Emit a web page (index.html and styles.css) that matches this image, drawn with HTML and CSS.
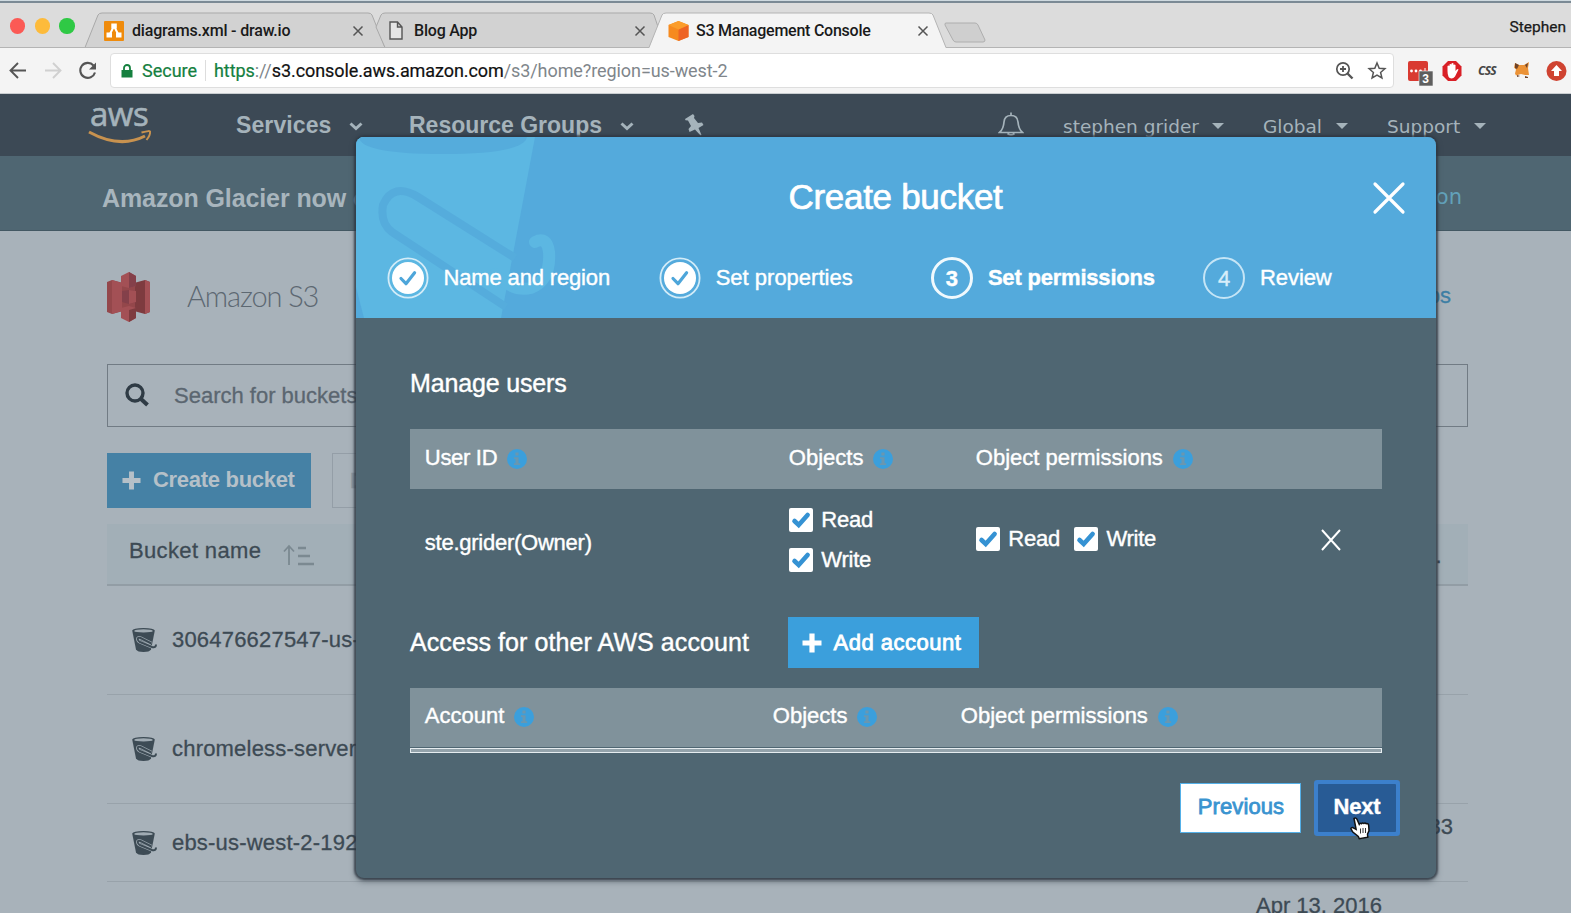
FILE: index.html
```html
<!DOCTYPE html>
<html lang="en">
<head>
<meta charset="utf-8">
<title>S3 Management Console</title>
<link rel="stylesheet" href="styles.css">
</head>
<body>
<svg class="defs" width="0" height="0" aria-hidden="true">
  <symbol id="info" viewBox="0 0 20 20"><circle cx="10" cy="10" r="10" fill="#3b9fdc"/><path d="M8.4 3.6h3.2v2.8H8.4zM7 8.2h4.6v6h1.6v1.7H6.9v-1.7h1.6V9.9H7z" fill="#6a97b0"/></symbol>
  <symbol id="check" viewBox="0 0 24 24"><path d="M5.500 13l4.200 4L18.600 7" fill="none" stroke="#3592d3" stroke-width="4.600" stroke-linecap="round"/></symbol>
  <symbol id="done" viewBox="0 0 42 42"><circle cx="21" cy="21" r="19.6" fill="none" stroke="#d3ecf8" stroke-width="1.8"/><circle cx="21" cy="21" r="16" fill="#fff"/><path d="M14 21.5l5 5.2 8.6-11" fill="none" stroke="#4ea6da" stroke-width="3.200" stroke-linecap="round" stroke-linejoin="round"/></symbol>
  <symbol id="bucket" viewBox="0 0 26 26"><path d="M1.2 3.5Q2 1 12.500 1T23.800 3.500L20 22.500Q18.500 25 12.500 25T5 22.500z" fill="#3d4b55"/><ellipse cx="12.500" cy="3.900" rx="9.300" ry="1.700" fill="#a0abb3"/><path d="M20.500 16.500L9.500 11Q6.500 10 6.800 12.500Q7 14 9 15L21 20Q25 21 25 17.500" fill="none" stroke="#a4afb7" stroke-width="3.400"/><path d="M20.500 16.500L9.500 11Q6.500 10 6.800 12.500Q7 14 9 15L21 20Q25 21 25 17.500" fill="none" stroke="#3d4b55" stroke-width="2"/></symbol>
  <symbol id="plus" viewBox="0 0 20 20"><path d="M10 .5v19M.5 10h19" fill="none" stroke="currentColor" stroke-width="5.200"/></symbol>
  <symbol id="cross" viewBox="0 0 14 14"><path d="M2.500 2.500l9 9M11.500 2.500l-9 9" fill="none" stroke="#555" stroke-width="1.500"/></symbol>
</svg>

<div class="titlebar">
  <div class="lights"><i class="red"></i><i class="yellow"></i><i class="green"></i></div>
  <svg class="tabshapes" width="1000" height="48" viewBox="0 0 1000 48">
    <path d="M85 47.500L98 15Q99 13 102 13H368Q371 13 372 15L385 47.500" fill="#d2d2d2" stroke="#a9a9a9"/>
    <path d="M376 27L381 15Q382 13 385 13H650Q653 13 654 15L665 47.500H385Z" fill="#d2d2d2" stroke="#a9a9a9"/>
    <path d="M649 48L662 15Q663 13 666 13H929Q932 13 933 15L946 48Z" fill="#f4f4f4"/>
    <path d="M0 47.500H649L662 15Q663 13 666 13H929Q932 13 933 15L946 47.500H1000" fill="none" stroke="#b4b4b4"/>
    <path d="M946 23H975Q977 23 978 25L985 40Q985 42 983 42H956Q954 42 953 40L945 25Q944.500 23 946 23z" fill="#cfcfcf" stroke="#aeaeae"/>
  </svg>
  <div class="tab tab1">
    <svg width="20" height="20" viewBox="0 0 20 20"><rect width="20" height="20" rx="1" fill="#ef8b0c"/><path d="M10 5L5.500 14M10 5l4.500 9" stroke="#fff" stroke-width="2"/><path d="M7.300 2.500h5.500v5H7.300zM2.500 11.500H8v5H2.500zM12 11.500h5.500v5H12z" fill="#fff"/></svg>
    <span class="t1">diagrams.xml - draw.io</span><svg class="x" width="14" height="14"><use href="#cross"/></svg>
  </div>
  <div class="tab tab2">
    <svg width="14" height="19" viewBox="0 0 14 19"><path d="M1 1h7.500L13 6v12H1zM8.500 1v5H13" fill="#e4e4e4" stroke="#555" stroke-width="1.400"/></svg>
    <span class="t2">Blog App</span><svg class="x" width="14" height="14"><use href="#cross"/></svg>
  </div>
  <div class="tab tab3">
    <svg width="21" height="20" viewBox="0 0 21 20"><path d="M10.500 0L20.500 4V16L10.500 20L.5 16V4z" fill="#f68a1f"/><path d="M10.500 8.500L20.500 4V16L10.500 20z" fill="#ee6424"/><path d="M10.500 0L20.500 4L10.500 8.500L.5 4z" fill="#fb9d2b"/></svg>
    <span class="t3">S3 Management Console</span><svg class="x" width="14" height="14"><use href="#cross"/></svg>
  </div>
  <span class="profile">Stephen</span>
</div>

<div class="toolbar">
  <svg class="navicons" width="110" height="46" viewBox="0 0 110 46" fill="none" stroke-width="1.900">
    <path d="M26 22.500H11M18 15l-7.500 7.500L18 30" stroke="#555"/>
    <path d="M45 22.500H60M53 15l7.500 7.500L53 30" stroke="#d0d0d0"/>
    <path d="M93.500 17.500A7.500 7.500 0 1 0 95 24.500" stroke="#555" stroke-width="2.100"/><path d="M96 14.500v7h-7z" fill="#555"/>
  </svg>
  <div class="omnibox">
    <svg width="12" height="14" viewBox="0 0 12 14"><path d="M.5 6h11v7.500H.5z" fill="#15803f"/><path d="M3 6V4a3 3 0 0 1 6 0v2" fill="none" stroke="#15803f" stroke-width="1.800"/></svg>
    <span class="secure">Secure</span>
    <span class="url"><b class="g">https</b>://<b class="k">s3.console.aws.amazon.com</b>/s3/home?region=us-west-2</span>
    <svg class="boxicons" width="54" height="22" viewBox="0 0 54 22" fill="none" stroke="#555"><circle cx="8" cy="9" r="6.200" stroke-width="1.700"/><path d="M12.500 13.500l5 5" stroke-width="2.400"/><path d="M5 9h6M8 6v6" stroke-width="1.800"/><path d="M42 3l2.200 5.200 5.700.5-4.300 3.700 1.300 5.500L42 15l-4.900 2.900 1.300-5.500-4.300-3.700 5.700-.5z" stroke-width="1.500"/></svg>
  </div>
  <svg class="exts" width="164" height="28" viewBox="0 0 164 28">
    <rect x="1" y="3" width="20" height="20" rx="2" fill="#d93a31"/><g fill="#fff"><circle cx="4.500" cy="13" r="1.400"/><circle cx="9" cy="13" r="1.400"/><circle cx="13.500" cy="13" r="1.400"/><path d="M17.500 10h1v6h-1z"/></g>
    <rect x="12" y="13" width="14" height="15" fill="#5e5e5e" stroke="#f4f4f4" stroke-width=".6"/><text x="15.200" y="25" class="badge">3</text>
    <path d="M41 3h8l5.500 5.500v9L49 23h-8l-5.500-5.500v-9z" fill="#d92027"/><path d="M40.500 13V8q1-1 2 0V6.500q1-1 2 0V5.500q1-1 2 0V7q1-1 2 0v6q2-3 3-1.500L48 18.500q-1.500 2-3.500 2-4 0-4-7.500z" fill="#fff"/>
    <text x="71" y="17" class="css">CSS</text>
    <path d="M108 5l4 2h5l5-3-1 6 1 7h-4l-4-1-5 1.500-1-2 1-4-2-2z" fill="#eb9236"/><path d="M108 5l4 2-2 4-2-1zM121 5l-3 2 2 3zM110 17l3 1-3 1zM118 18l3 1v1h-3z" fill="#6f4329"/>
    <circle cx="149.500" cy="13" r="10" fill="#cf4331"/><path d="M149.500 7l5.500 6h-3v5h-5v-5h-3z" fill="#fff"/>
  </svg>
</div>

<header class="awsnav">
  <div class="logo"><span>aws</span><svg width="64" height="16" viewBox="0 0 64 16"><path d="M1 3Q32 20 57 7" fill="none" stroke="#c8924f" stroke-width="3"/><path d="M53.500 3.500Q63 1 62 3Q62.500 6 58.500 11" fill="none" stroke="#c8924f" stroke-width="2"/></svg></div>
  <span class="nav services">Services</span>
  <svg class="chev c1" width="14" height="9"><path d="M1.500 1.500L7 6.500L12.500 1.500" /></svg>
  <span class="nav groups">Resource Groups</span>
  <svg class="chev c2" width="14" height="9"><path d="M1.500 1.500L7 6.500L12.500 1.500" /></svg>
  <svg class="pin" width="20" height="22" viewBox="0 0 20 22"><path d="M1 5L9 0l1.500 2L10 4l4 5 4-.5 1.500 2.500-5 3 3 7-1 .5-5.500-6-5.500 2.500-1-3 2.500-3-3-5.500-2.500-.2z" fill="#a5b3bb"/></svg>
  <svg class="bell" width="26" height="25" viewBox="0 0 26 25"><path d="M1.500 20.500Q5.500 17 6 10Q6.500 3.500 13 3.500T20 10Q20.500 17 24.500 20.500zM13 3.500V.5M9.500 21.500q3.500 3 7 0" fill="none" stroke="#a5b3bb" stroke-width="1.700"/></svg>
  <span class="user u1">stephen grider</span><i class="caret"></i>
  <span class="user u2">Global</span><i class="caret"></i>
  <span class="user u3">Support</span><i class="caret"></i>
</header>

<div class="banner"><span class="msg">Amazon Glacier now o</span><a>on</a></div>

<main>
  <div class="heading">
    <svg width="43" height="50" viewBox="0 0 43 50"><path d="M0 10l5-2 11 3v28L5 42l-5-2z" fill="#94474b"/><path d="M5 8l10 3v28L5 42z" fill="#a35055"/><path d="M43 10l-5-2-11 3v28l11 3 5-2z" fill="#7e3b3f"/><path d="M38 8l5 2v30l-5 2z" fill="#a35055"/><path d="M15 14h13v22H15z" fill="#94474b"/><path d="M14 4l8-4 7 4v10l-7 2-8-2z" fill="#a35055"/><path d="M22 0l7 4v10l-7 2z" fill="#84404a"/><path d="M15 19l7-1 7 1v11l-7 2-7-2z" fill="#84404a"/><path d="M22 18l7 1v11l-7 2z" fill="#a35055"/><path d="M14 36l8-2 7 2v10l-7 4-8-4z" fill="#a35055"/><path d="M22 38l7-2v10l-7 4z" fill="#7e3b3f"/></svg>
    <h1>Amazon S3</h1><a>ps</a>
  </div>
  <div class="search">
    <svg width="24" height="24" viewBox="0 0 24 24"><circle cx="10" cy="10" r="8" fill="none" stroke="#2f3b45" stroke-width="3.400"/><path d="M16 16l6.500 6" stroke="#2f3b45" stroke-width="4"/></svg>
    <span>Search for buckets</span>
  </div>
  <div class="actions">
    <div class="create"><svg width="19" height="19" viewBox="0 0 20 20"><use href="#plus"/></svg><span>Create bucket</span></div>
    <div class="ghost">D</div>
  </div>
  <div class="thead"><span>Bucket name</span>
    <svg width="32" height="22" viewBox="0 0 32 22" fill="none" stroke="#7b8991"><path d="M6 21V2M1 7.500l5-5.500 5 5.500" stroke-width="1.800"/><path d="M15 4h8M15 12h12M15 20h16" stroke-width="2.600"/></svg><em>.</em>
  </div>
  <div class="row r1"><svg width="26" height="26"><use href="#bucket"/></svg><span>306476627547-us-</span></div>
  <div class="row r2"><svg width="26" height="26"><use href="#bucket"/></svg><span>chromeless-server</span></div>
  <div class="row r3"><svg width="26" height="26"><use href="#bucket"/></svg><span>ebs-us-west-2-192</span><em>33</em></div>
  <div class="row r4"><em>Apr 13, 2016</em></div>
</main>
<div class="haze"></div>

<section class="modal">
  <div class="mhead">
    <svg class="mark" width="200" height="181" viewBox="0 0 200 181">
      <path d="M0 0H179L145 181H8L0 150z" fill="#5cb7e2"/>
      <path d="M3 0H171Q168 17 86 17T3 0z" fill="#55acdc"/>
      <path d="M159 121L62 60Q37 45 27 68Q24 86 36 95L150 170" fill="none" stroke="#55acdc" stroke-width="8"/>
      <path d="M179 105q12-6 14 10 2 28-18 36-18 4-36-14" fill="none" stroke="#5cb7e2" stroke-width="12" stroke-linecap="round"/>
    </svg>
    <h2>Create bucket</h2>
    <svg class="close" width="34" height="34" viewBox="0 0 34 34"><path d="M3 3l28 28M31 3L3 31" stroke="#fff" stroke-width="3.200" stroke-linecap="round"/></svg>
    <div class="steps">
      <div class="step s1"><svg width="42" height="42"><use href="#done"/></svg><span>Name and region</span></div>
      <div class="step s2"><svg width="42" height="42"><use href="#done"/></svg><span>Set properties</span></div>
      <div class="step s3"><b class="num">3</b><span>Set permissions</span></div>
      <div class="step s4"><b class="num">4</b><span>Review</span></div>
    </div>
  </div>
  <div class="mbody">
    <h3>Manage users</h3>
    <div class="grid head g1">
      <div><span class="uid">User ID</span><svg width="20" height="20"><use href="#info"/></svg></div>
      <div><span>Objects</span><svg width="20" height="20"><use href="#info"/></svg></div>
      <div><span>Object permissions</span><svg width="20" height="20"><use href="#info"/></svg></div>
    </div>
    <div class="grid users">
      <div class="owner">ste.grider(Owner)</div>
      <div class="stack">
        <label><svg class="cb" width="24" height="24"><use href="#check"/></svg><span>Read</span></label>
        <label><svg class="cb" width="24" height="24"><use href="#check"/></svg><span>Write</span></label>
      </div>
      <div class="inline">
        <label><svg class="cb" width="24" height="24"><use href="#check"/></svg><span>Read</span></label>
        <label><svg class="cb" width="24" height="24"><use href="#check"/></svg><span>Write</span></label>
      </div>
      <svg class="remove" width="22" height="24" viewBox="0 0 22 24"><path d="M2 2l18 20M20 2L2 22" stroke="#fff" stroke-width="2"/></svg>
    </div>
    <div class="other"><h3>Access for other AWS account</h3>
      <div class="add"><svg width="20" height="20"><use href="#plus"/></svg><span>Add account</span></div></div>
    <div class="grid head g2">
      <div><span>Account</span><svg width="20" height="20"><use href="#info"/></svg></div>
      <div><span>Objects</span><svg width="20" height="20"><use href="#info"/></svg></div>
      <div><span>Object permissions</span><svg width="20" height="20"><use href="#info"/></svg></div>
    </div>
    <div class="rule"></div>
    <div class="buttons"><div class="prev">Previous</div><div class="next">Next</div></div>
  </div>
  <svg class="cursor" width="22" height="24" viewBox="0 0 22 24"><path d="M4 1.500q2-1.200 3 .8l2.200 5q.8-1.500 2.300-.6 1-1.200 2.400-.2 1.200-1 2.300.2 2.300-.6 2.500 2l.3 5-1.500 3.500.3 3-8.500 1.500-1-2.200-5.500-4.500-2-3.500q1-2 3.500-.2l1.800 1z" fill="#fff" stroke="#111" stroke-width="1.500"/><path d="M10.500 11.500v5M13 11v5M15.500 11v5" stroke="#333" stroke-width="1"/></svg>
</section>
</body>
</html>
```
FILE: styles.css
```css
* { box-sizing: border-box; }
body { margin: 0; width: 1571px; height: 913px; overflow: hidden; position: relative; background: #a8b2ba; font-family: "Liberation Sans", Arial, sans-serif; font-size: 22px; color: #3d4a54; white-space: nowrap; }
svg { display: block; flex: none; }
.defs { position: absolute; }
h1, h2, h3 { margin: 0; font-weight: 400; }
em, i { font-style: normal; }

/* Browser window */
.titlebar { height: 48px; position: relative; display: flex; align-items: center; background: #dcdcdc; border-top: 1px solid #cfdae0; box-shadow: inset 0 2px 0 #7b8a95, inset 0 -1px 0 #b4b4b4; font-family: Roboto, sans-serif; font-size: 16px; font-weight: 500; letter-spacing: -.18px; color: #1a1a1a; }
.lights { display: flex; gap: 9.5px; padding: 3px 0 0 10px; width: 104px; flex: none; z-index: 1; }
.lights i { width: 15.200px; height: 15.200px; border-radius: 50%; }
.red { background: #fb5a55; } .yellow { background: #fdbb3b; } .green { background: #2fc945; }
.tabshapes { position: absolute; left: 0; top: -1px; }
.tab { display: flex; align-items: center; position: relative; padding-top: 12px; height: 47px; flex: none; }
.tab span { flex: 1; }
.tab1 { width: 285px; } .tab1 span { margin-left: 8px; }
.tab2 { width: 279px; } .tab2 span { margin-left: 11px; letter-spacing: -.2px; }
.tab3 { width: 262px; } .tab3 span { margin-left: 7px; letter-spacing: -.24px; }
.tab1 .x { margin-right: 24px; } .tab2 .x { margin-right: 21px; }
.profile { margin-left: auto; padding: 5px 5px 0 0; font-size: 15.500px; font-weight: 400; letter-spacing: 0; -webkit-text-stroke: .25px; }
.toolbar { height: 46px; background: #f4f4f4; border-bottom: 1px solid #c9cdd0; display: flex; align-items: flex-start; }
.omnibox { width: 1286px; height: 35px; margin-top: 5px; background: #fff; border: 1.500px solid #dedede; border-radius: 4px; display: flex; align-items: center; padding-left: 10px; font: 18px Roboto, sans-serif; color: #80868b; }
.secure { color: #15803f; margin-left: 9px; width: 64px; border-right: 1px solid #ddd; }
.url { margin-left: 8px; flex: 1; letter-spacing: -.08px; }
.url b { font-weight: 400; } .g { color: #15803f; } .k { color: #111; }
.g, .k, .secure { -webkit-text-stroke: .2px; }
.boxicons { margin-right: 4px; }
.exts { margin: 10px 0 0 13px; }
.badge { font: bold 12px "Liberation Sans", sans-serif; fill: #fff; }
.css { font: italic bold 12px "Open Sans", sans-serif; fill: #444; letter-spacing: -.7px; }

/* Console header */
.awsnav { height: 61.500px; background: #3c4955; display: flex; align-items: center; color: #a5b3bb; }
.logo { width: 236px; padding-left: 88px; height: 62px; }
.logo span { display: block; font: 33px/40px "Open Sans", sans-serif; letter-spacing: -.5px; padding-left: 2px; height: 35px; -webkit-text-stroke: .6px; }
.nav { font-weight: 700; font-size: 23px; padding-top: 2px; }
.services { width: 113px; letter-spacing: .1px; } .groups { width: 211px; }
.chev { fill: none; stroke: #a5b3bb; stroke-width: 3; margin-top: 3px; }
.c1 { margin-right: 46px; } .c2 { margin-right: 50px; }
.pin { margin-right: 293.500px; }
.bell { margin-right: 40px; }
.user { font: 18.500px "DejaVu Sans", sans-serif; padding-top: 3px; margin-left: -.5px; }
.u1 { width: 149px; } .u2 { width: 73px; } .u3 { width: 87px; }
.caret { border: 6px solid transparent; border-top-color: #a5b3bb; border-bottom: 0; margin: 3px 34px 0 0; width: 12px; }
.caret + .u2 { margin-left: 5px; } .caret + .u3 { margin-left: 5px; }
.banner { height: 75.500px; background: #4f6672; border-bottom: 1px solid #435863; display: flex; align-items: center; padding: 11px 109px 0 102px; justify-content: space-between; color: #a8b5bd; }
.msg { font-weight: 700; font-size: 25px; letter-spacing: -.1px; }
.banner a { font: 21px "DejaVu Sans", sans-serif; color: #62a1ba; margin-top: -3px; }

/* Bucket list */
main { width: 1361px; height: 682px; margin-left: 107px; -webkit-text-stroke: .3px; }
.heading { height: 132.500px; display: flex; align-items: center; }
.heading h1 { font-family: Lato, sans-serif; font-weight: 300; font-size: 29px; letter-spacing: -1.100px; margin: -3px 0 0 37px; flex: 1; color: #5d6872; -webkit-text-stroke: 0; }
.heading a { color: #3e7fa5; margin: -2px 17px 0 0; }
.search { height: 63px; border: 1.500px solid #717b84; display: flex; align-items: center; padding-left: 17px; color: #5b6670; }
.search span { margin-left: 25px; padding-top: 1px; }
.actions { display: flex; gap: 21px; margin-top: 26px; height: 55.500px; }
.create { width: 204px; height: 55.500px; background: #4581a5; color: #b5c0c8; display: flex; align-items: center; padding: 0 0 0 15px; gap: 12px; font-weight: 700; -webkit-text-stroke: 0; letter-spacing: -.3px; }
.ghost { width: 200px; border: 1px solid #949ea7; padding: 14px 17px; font-weight: 700; color: #8d98a1; }
.thead { height: 62px; margin-top: 15.500px; background: #a2afb7; border-bottom: 2px solid #929da5; display: flex; align-items: center; padding-left: 22px; padding-bottom: 5px; letter-spacing: .35px; }
.thead svg { margin: 8px 0 0 22px; }
.thead em { margin-left: auto; margin-right: 26px; padding-top: 10px; }
.row { display: flex; align-items: center; border-bottom: 1px solid #98a2aa; padding-left: 24px; }
.row span { margin-left: 15px; letter-spacing: .2px; }
.row em { margin-left: auto; }
.r1, .r2 { height: 109px; } .r3 { height: 78.500px; } .r4 { height: 32px; border: 0; padding-top: 16px; }
.r3 em { margin: -30px 15px 0 auto; } .r4 em { margin-right: 86px; }
.r3 span { padding-top: 1px; }
.row svg { margin-top: 1px; }
.haze { position: absolute; left: 640px; top: 878px; width: 300px; height: 35px; background: radial-gradient(closest-side at 50% 100%, #8b979f, transparent); opacity: .45; }

/* Dialog */
.modal { position: absolute; left: 355.500px; top: 136.500px; width: 1080.500px; height: 741px; background: #4f6672; border-radius: 8px; box-shadow: 0 0 2px 2px rgba(45,55,65,.75), 0 3px 6px rgba(40,50,60,.6); color: #fff; -webkit-text-stroke: .4px; letter-spacing: -.1px; }
.mhead { height: 181px; background: #54aadc; border-radius: 8px 8px 0 0; position: relative; overflow: hidden; }
.mark { position: absolute; left: 0; top: 0; }
.mhead h2 { position: relative; font-size: 35px; line-height: 40px; padding: 40px 0 0 433px; letter-spacing: -.3px; -webkit-text-stroke: .7px; }
.close { position: absolute; left: 1016.500px; top: 44.500px; }
.steps { position: relative; display: grid; grid-template-columns: 272.200px 272.200px 272.200px 1fr; padding: 40px 0 0 31px; }
.step { display: flex; align-items: center; gap: 15px; height: 42px; }
.step span { padding-top: 1px; }
.s1 { letter-spacing: -.15px; } .s2 { letter-spacing: 0; }
.num { width: 42px; height: 42px; border: 3px solid #f0f9fd; border-radius: 50%; text-align: center; line-height: 37px; font-weight: 700; }
.s3 { font-weight: 700; letter-spacing: -.2px; }
.s4 .num { border-width: 2px; border-color: #c5e5f6; font-weight: 400; color: #d8eefa; line-height: 39px; }
.mbody { padding: 0 54px 0 54.500px; }
.mbody h3 { font-size: 25px; line-height: 30px; padding-top: 50px; letter-spacing: -.15px; }
.grid { display: grid; grid-template-columns: 364px 187px 300px 1fr; padding-left: 14.800px; }
.head { height: 60px; background: #80929b; align-items: center; padding-bottom: 3px; letter-spacing: 0; }
.head div { display: flex; align-items: center; gap: 10px; }
.head svg { margin-top: 2px; }
.uid { letter-spacing: -.3px; }
.g1 { margin-top: 31.500px; }
.users { height: 128px; }
.owner { padding-top: 41px; letter-spacing: -.25px; }
.users label { display: flex; align-items: center; gap: 8.500px; height: 24px; letter-spacing: -.25px; }
.cb { background: #fff; border-radius: 2px; }
.stack { padding-top: 19px; display: flex; flex-direction: column; gap: 15.500px; }
.inline { padding-top: 38px; display: flex; gap: 14px; }
.remove { margin: 39px 0 0 44.200px; }
.other { display: flex; height: 51px; }
.other h3 { padding: 0; line-height: 50px; width: 377.500px; letter-spacing: .08px; }
.add { width: 191px; height: 51px; background: #3b9fdc; display: flex; align-items: center; padding-left: 14px; gap: 12px; letter-spacing: .5px; -webkit-text-stroke: .8px; }
.g2 { margin-top: 20px; height: 59px; grid-template-columns: 348px 188px 1fr; padding-bottom: 3px; }
.rule { height: 5px; margin-top: 1px; background: #94a3ab; border: 1.500px solid #e6edf0; }
.buttons { display: flex; justify-content: flex-end; gap: 18px; margin: 30px -16px 0 0; line-height: 46px; text-align: center; }
.prev { height: 50px; width: 121px; background: #fff; border: 1.500px solid #54b0e8; color: #3a94d0; letter-spacing: .1px; padding-left: 1px; margin-right: -1px; -webkit-text-stroke: .8px; }
.next { height: 48px; font-weight: 700; width: 78px; background: #285b95; box-shadow: 0 0 0 4px #3c80cc; border-radius: 1px; margin: 1px 2px 0 0; line-height: 46px; letter-spacing: -.2px; }
.cursor { position: absolute; left: 994px; top: 680px; }
```
